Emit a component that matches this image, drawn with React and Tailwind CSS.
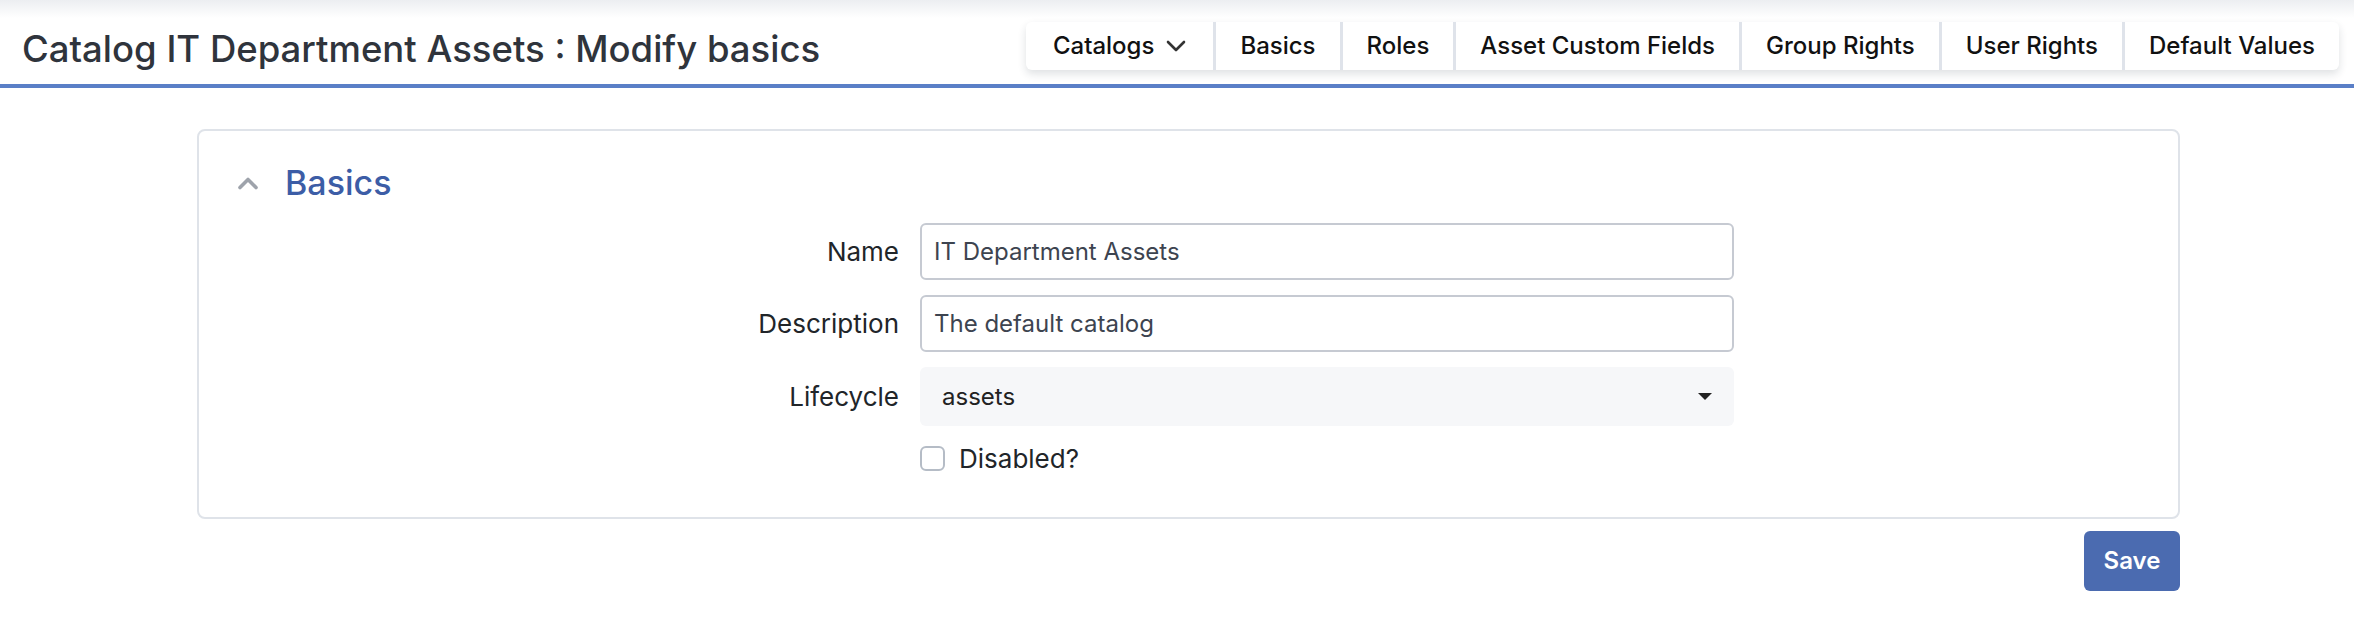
import React from "react";

const tabs = ["Basics", "Roles", "Asset Custom Fields", "Group Rights", "User Rights", "Default Values"];

function Row({ label, children }) {
  return (
    <div className="flex items-center">
      <div className="w-[721px] pr-[21px] text-right text-[26px] text-[#212529]">{label}</div>
      {children}
    </div>
  );
}

export default function App() {
  return (
    <div className="w-[2354px] h-[636px] bg-white font-['Inter','Noto_Sans',sans-serif] overflow-hidden">
      <header className="h-[84px] flex justify-between bg-[linear-gradient(to_bottom,#eceef1_0px,#ffffff_18px)]">
        <h1 className="pl-[22px] pt-[28px] text-[36.5px] leading-[43px] font-medium text-[#2f343c]">
          Catalog IT Department Assets : Modify basics
        </h1>
        <nav className="mt-[22px] mr-[15px] h-[48px] flex bg-white rounded-[6px] shadow-[0_4px_8px_rgba(30,40,60,0.14)]">
          <div className="flex items-center gap-[12px] pl-[27px] pr-[27px] text-[24px] font-medium text-[#111]">
            Catalogs
            <svg width="20" height="12" viewBox="0 0 20 12" fill="none">
              <path d="M2 2l8 8 8-8" stroke="#333" strokeWidth="2.6" strokeLinecap="round" strokeLinejoin="round" />
            </svg>
          </div>
          {tabs.map((t) => (
            <div key={t} className="flex items-center px-[24px] border-l-[3px] border-[#dfe3ea] text-[24px] font-medium text-[#111]">
              {t}
            </div>
          ))}
        </nav>
      </header>
      <div className="h-[4px] bg-[#5a7fc7]" />

      <main className="ml-[197px] w-[1983px] mt-[41px]">
        <section className="border-2 border-[#dfe3e9] rounded-[8px] pt-[31px] pb-[41px]">
          <div className="flex items-center pl-[38px]">
            <svg width="22" height="14" viewBox="0 0 22 14" fill="none">
              <path d="M3 11.5l8-8 8 8" stroke="#9ea3ab" strokeWidth="3.6" strokeLinecap="round" strokeLinejoin="round" />
            </svg>
            <h2 className="ml-[26px] text-[34px] leading-[41px] font-medium text-[#3c5da6]">Basics</h2>
          </div>
          <div className="mt-[20px] flex flex-col gap-[15px]">
            <Row label="Name">
              <div className="w-[814px] h-[57px] border-2 border-[#c6cad2] rounded-[6px] pl-[12px] flex items-center text-[24px] text-[#3d4450]">
                IT Department Assets
              </div>
            </Row>
            <Row label="Description">
              <div className="w-[814px] h-[57px] border-2 border-[#c6cad2] rounded-[6px] pl-[12px] flex items-center text-[24px] text-[#3d4450]">
                The default catalog
              </div>
            </Row>
            <Row label="Lifecycle">
              <div className="w-[814px] h-[59px] bg-[#f6f7f9] rounded-[6px] pl-[22px] pr-[22px] flex items-center justify-between text-[24px] text-[#222]">
                assets
                <svg width="14" height="7" viewBox="0 0 14 7">
                  <path d="M0 0h14L7 7z" fill="#222" />
                </svg>
              </div>
            </Row>
            <div className="flex items-center h-[36px] mt-[-1px]">
              <div className="w-[721px]" />
              <div className="w-[25px] h-[25px] border-2 border-[#b5bcc6] rounded-[6px] bg-white" />
              <span className="ml-[14px] text-[26px] text-[#212529]">Disabled?</span>
            </div>
          </div>
        </section>
        <div className="flex justify-end mt-[12px]">
          <button className="w-[96px] h-[60px] rounded-[6px] bg-[#4b6bb0] text-white text-[24px] font-semibold">
            Save
          </button>
        </div>
      </main>
    </div>
  );
}
